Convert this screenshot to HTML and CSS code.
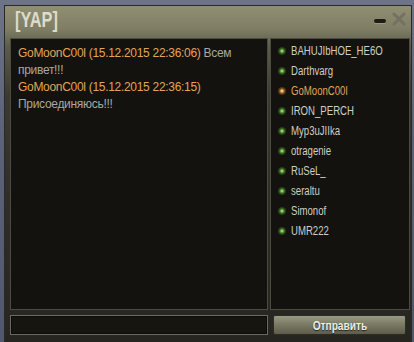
FILE: index.html
```html
<!DOCTYPE html>
<html>
<head>
<meta charset="utf-8">
<link rel="stylesheet" href="styles.css">
</head>
<body>
<div class="window">
  <div class="titlebar">
    <div class="title"><span class="narrow">[YAP]</span></div>
    <div class="controls">
      <span class="minimize"></span>
      <svg class="close" width="14" height="14" viewBox="0 0 14 14"><path d="M2 2 L12 12 M12 2 L2 12" stroke="#727162" stroke-width="3" stroke-linecap="round"/></svg>
    </div>
  </div>
  <div class="main">
    <div class="chat">
      <p class="msg"><span class="author">GoMoonC00l (15.12.2015 22:36:06)</span> <span class="text">Всем</span> <span class="text">привет!!!</span></p>
      <p class="msg"><span class="author">GoMoonC00l (15.12.2015 22:36:15)</span> <span class="text">Присоединяюсь!!!</span></p>
    </div>
    <ul class="users">
      <li class="user"><span class="dot"></span><span class="name">BAHUJIbHOE_HE6O</span></li>
      <li class="user"><span class="dot"></span><span class="name">Darthvarg</span></li>
      <li class="user me"><span class="dot"></span><span class="name">GoMoonC00l</span></li>
      <li class="user"><span class="dot"></span><span class="name">IRON_PERCH</span></li>
      <li class="user"><span class="dot"></span><span class="name">Myp3uJIIka</span></li>
      <li class="user"><span class="dot"></span><span class="name">otragenie</span></li>
      <li class="user"><span class="dot"></span><span class="name">RuSeL_</span></li>
      <li class="user"><span class="dot"></span><span class="name">seraltu</span></li>
      <li class="user"><span class="dot"></span><span class="name">Simonof</span></li>
      <li class="user"><span class="dot"></span><span class="name">UMR222</span></li>
    </ul>
  </div>
  <div class="bottom">
    <div class="input"></div>
    <button class="send"><span class="send-label">Отправить</span></button>
  </div>
</div>
</body>
</html>
```
FILE: styles.css
```css
html, body {
  margin: 0;
  padding: 0;
  height: 100%;
  overflow: hidden;
}
body {
  background: linear-gradient(180deg, #6e7488 0, #5a6379 40%, #4f586c 100%);
  font-family: "Liberation Sans", Arial, sans-serif;
}
.window {
  margin: 5px 0 0 4px;
  width: 408px;
  height: 345px;
  box-sizing: border-box;
  border: 1px solid #2a2a24;
  border-bottom: none;
  background: linear-gradient(180deg, #908f73 0, #807f66 22px, #5e5d4c 40px, #3a3932 90px, #2e2d28 200px, #26251f 100%);
}
.titlebar {
  height: 32px;
  display: flex;
  align-items: center;
  justify-content: space-between;
  padding: 0 5px 0 10px;
}
.title {
  font-weight: bold;
  font-size: 22px;
  color: #dcdccc;
  margin-top: -5px;
}
.narrow {
  display: inline-block;
  transform: scaleX(0.74);
  transform-origin: left center;
}
.controls {
  display: flex;
  align-items: center;
  gap: 6px;
  margin-top: -6px;
}
.minimize {
  width: 12px;
  height: 4px;
  border-radius: 2px;
  background: #1c1b16;
  box-shadow: 0 1px 0 #9a9980;
  margin-top: 4px;
}
.main {
  display: flex;
  gap: 2px;
  padding: 0 1px 0 5px;
  height: 272px;
}
.chat {
  width: 258px;
  box-sizing: border-box;
  border: 1px solid #4c4b42;
  background: #13120e;
  padding: 6px 8px 0 7px;
}
.msg {
  margin: 0;
  font-size: 12px;
  line-height: 17px;
  letter-spacing: -0.3px;
  color: #a9a8a0;
}
.author {
  color: #e2a458;
}
.users {
  flex: 1;
  list-style: none;
  margin: 0;
  box-sizing: border-box;
  border: 1px solid #4c4b42;
  background: #13120e;
  padding: 2px 0 0 7px;
}
.user {
  display: flex;
  align-items: center;
  gap: 5px;
  height: 20px;
  font-size: 12px;
  color: #cfcfc6;
}
.name {
  display: inline-block;
  white-space: nowrap;
  transform: scaleX(0.8);
  transform-origin: left center;
}
.dot {
  width: 8px;
  height: 8px;
  flex: none;
  border-radius: 50%;
  background: radial-gradient(circle, #d0f0a8 0, #70b048 22%, rgba(70,140,40,0.5) 50%, rgba(40,80,20,0) 100%);
}
.me {
  color: #e2a458;
}
.me .dot {
  background: radial-gradient(circle, #fff0c0 0, #e0a050 22%, rgba(180,110,40,0.5) 50%, rgba(100,60,20,0) 100%);
}
.bottom {
  display: flex;
  gap: 5px;
  padding: 5px 0 0 5px;
}
.input {
  width: 258px;
  height: 20px;
  box-sizing: border-box;
  border: 1px solid #6c6b60;
  background: #16150f;
  box-shadow: inset 0 0 0 1px #0c0b08;
}
.send {
  width: 133px;
  height: 20px;
  box-sizing: border-box;
  border: 1px solid #2c2b24;
  border-radius: 2px;
  background: linear-gradient(180deg, #9a9a84 0, #7c7b66 45%, #5e5d4c 100%);
  font-weight: bold;
  font-size: 13px;
  color: #eeeee4;
  text-shadow: 0 1px 1px #222;
  padding: 0;
  font-family: "Liberation Sans", Arial, sans-serif;
}
.send-label {
  display: inline-block;
  transform: scaleX(0.78);
}
```
